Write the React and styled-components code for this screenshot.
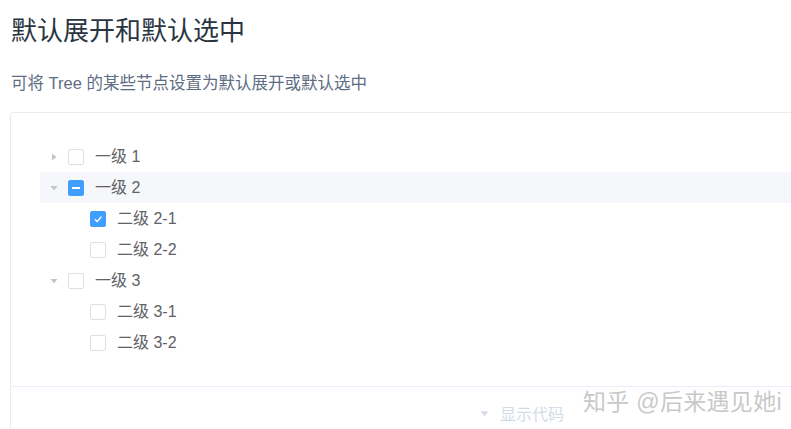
import React from 'react';
import styled, { createGlobalStyle } from 'styled-components';

const GlobalStyle = createGlobalStyle`
  html, body {
    margin: 0;
    padding: 0;
    background: #fff;
    overflow: hidden;
  }
  body {
    font-family: "Liberation Sans", "Noto Sans CJK SC", sans-serif;
  }
`;

const Page = styled.div`
  padding: 12px 0 0 11px;
  width: 1100px;
`;

const Title = styled.h3`
  margin: 0;
  font-size: 26px;
  line-height: 39px;
  font-weight: 400;
  color: #2a3542;
`;

const Desc = styled.p`
  margin: 20px 0 0;
  font-size: 16.5px;
  line-height: 24px;
  color: #5e6d82;
`;

const DemoBlock = styled.div`
  position: relative;
  margin: 17px 0 0 -1px;
  width: 1022px;
  border: 1px solid #ebebeb;
  border-radius: 3px;
`;

const Source = styled.div`
  padding: 28px 0 28px 29px;
`;

const Row = styled.div`
  display: flex;
  align-items: center;
  height: 31px;
  padding-left: ${p => p.level * 22}px;
  background: ${p => (p.hover ? '#f5f7fa' : 'transparent')};
`;

const Arrow = styled.span`
  width: 28px;
  height: 31px;
  display: flex;
  align-items: center;
  justify-content: center;
  flex-shrink: 0;
  svg {
    transform: rotate(${p => (p.open ? 90 : 0)}deg);
    visibility: ${p => (p.leaf ? 'hidden' : 'visible')};
  }
`;

const Box = styled.span`
  width: 16px;
  height: 16px;
  box-sizing: border-box;
  border-radius: 2px;
  border: 1px solid ${p => (p.state ? '#409eff' : '#dcdfe6')};
  background: ${p => (p.state ? '#409eff' : '#fff')};
  display: flex;
  align-items: center;
  justify-content: center;
  margin-right: 11px;
  flex-shrink: 0;
`;

const Label = styled.span`
  font-size: 16px;
  color: #606266;
  line-height: 1;
`;

const Control = styled.div`
  border-top: 1px solid #eaeefb;
  height: 52px;
  display: flex;
  align-items: center;
  justify-content: center;
  gap: 11px;
  color: #d3dce6;
  font-size: 16px;
`;

const Watermark = styled.div`
  position: absolute;
  left: 572px;
  top: 270px;
  font-size: 23px;
  color: #c9c9c9;
  letter-spacing: 0.3px;
  text-shadow: 0 0 2px #fff;
  pointer-events: none;
  white-space: nowrap;
`;

const Caret = ({ color = '#c0c4cc', size = 8 }) => (
  <svg width={size} height={size} viewBox="0 0 8 8">
    <path d="M2 0.5 L6.5 4 L2 7.5 Z" fill={color} />
  </svg>
);

const rows = [
  { label: '一级 1', level: 0, open: false },
  { label: '一级 2', level: 0, open: true, state: 'half', hover: true },
  { label: '二级 2-1', level: 1, leaf: true, state: 'on' },
  { label: '二级 2-2', level: 1, leaf: true },
  { label: '一级 3', level: 0, open: true },
  { label: '二级 3-1', level: 1, leaf: true },
  { label: '二级 3-2', level: 1, leaf: true },
];

const Check = ({ state }) => {
  if (state === 'on')
    return (
      <svg width="10" height="10" viewBox="0 0 10 10">
        <path d="M1.8 5.2 L4.2 7.4 L8.4 2.6" fill="none" stroke="#fff" strokeWidth="1.4" />
      </svg>
    );
  if (state === 'half')
    return <span style={{ width: 8, height: 2, background: '#fff', display: 'block' }} />;
  return null;
};

export default function App() {
  return (
    <Page>
      <GlobalStyle />
      <Title>默认展开和默认选中</Title>
      <Desc>可将 Tree 的某些节点设置为默认展开或默认选中</Desc>
      <DemoBlock>
        <Source>
          {rows.map(r => (
            <Row key={r.label} level={r.level} hover={r.hover}>
              <Arrow open={r.open} leaf={r.leaf}>
                <Caret />
              </Arrow>
              <Box state={r.state}>
                <Check state={r.state} />
              </Box>
              <Label>{r.label}</Label>
            </Row>
          ))}
        </Source>
        <Control>
          <span style={{ transform: 'rotate(90deg)', display: 'flex' }}>
            <Caret color="#d3dce6" size={9} />
          </span>
          <span>显示代码</span>
        </Control>
        <Watermark>知乎 @后来遇见她i</Watermark>
      </DemoBlock>
    </Page>
  );
}
